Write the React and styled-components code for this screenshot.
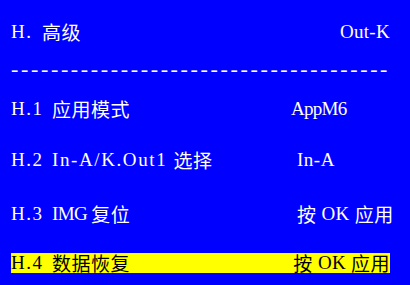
import React from "react";
import styled, { createGlobalStyle } from "styled-components";

const Global = createGlobalStyle`
    html, body {
        margin:0;
        padding:0;
        background:#0000fe;
    }
`
const Screen = styled.div`
    width:410px;
    height:285px;
    box-sizing:border-box;
    padding:12px 20px 0 11px;
    background:#0000fe;
    color:#ffffff;
    font-family:"Liberation Serif", "Noto Sans CJK SC", serif;
    font-size:19px;
    overflow:hidden;
    display:flex;
    flex-direction:column;
`
const Row = styled.div`
    height:${p => p.$h}px;
    display:grid;
    grid-template-columns:${p => p.$split ? `${p.$split}px 1fr` : "1fr auto"};
    align-items:center;
    line-height:20px;
    white-space:pre;
`
const Selected = styled(Row)`
    margin-top:13px;
    background:#ffff00;
    color:#000000;
`
const Label = styled.span`
    display:flex;
    align-items:center;
`
const Code = styled.span`
    width:${p => p.$w || 41}px;
    flex:none;
    letter-spacing:1.5px;
`
const Latin = styled.span`
    letter-spacing:${p => p.$ls || 0}px;
`
const Divider = styled.div`
    height:34px;
    display:flex;
    align-items:center;
    white-space:pre;
    overflow:hidden;
    font-size:22px;
    letter-spacing:2.65px;
`
const Han = styled.span`
    font-family:"Noto Sans CJK SC", sans-serif;
    font-size:19px;
    letter-spacing:0.5px;
    font-weight:400;
`
const Value = styled.span`
    display:flex;
    align-items:center;
    letter-spacing:${p => p.$ls ?? 0.3}px;
`

export default function App(){
    return(
        <>
        <Global/>
        <Screen>
            <Row $h={40}>
                <Label><Code $w={31}>H.</Code><Han>高级</Han></Label>
                <Value>Out-K</Value>
            </Row>
            <Divider>{"-".repeat(38)}</Divider>
            <Row $h={46} $split={280}>
                <Label><Code>H.1</Code><Han>应用模式</Han></Label>
                <Value $ls={-0.7}>AppM6</Value>
            </Row>
            <Row $h={56} $split={286}>
                <Label><Code>H.2</Code><Latin $ls={1.6}>In-A/K.Out1 </Latin><Han>选择</Han></Label>
                <Value $ls={0.5}>In-A</Value>
            </Row>
            <Row $h={52} $split={286}>
                <Label><Code>H.3</Code><Latin $ls={-0.6}>IMG </Latin><Han>复位</Han></Label>
                <Value><Han>按</Han> OK <Han>应用</Han></Value>
            </Row>
            <Selected $h={20}>
                <Label><Code>H.4</Code><Han>数据恢复</Han></Label>
                <Value><Han>按</Han> OK <Han>应用</Han></Value>
            </Selected>
        </Screen>
        </>
    )
}
